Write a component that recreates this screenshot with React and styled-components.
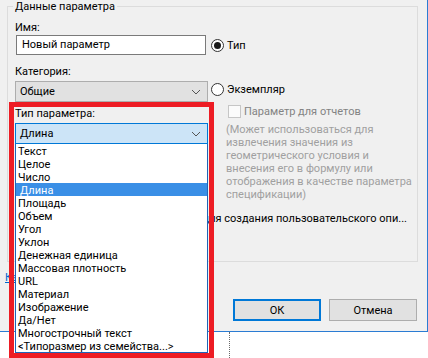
import React from 'react';
import styled, { createGlobalStyle } from 'styled-components';

const GlobalStyle = createGlobalStyle`
  html, body {
    margin: 0;
    padding: 0;
    background: #fff;
  }
  body {
    font-family: Roboto, 'Segoe UI', sans-serif;
    font-size: 11px;
    color: #000;
    overflow: hidden;
  }
  * {
    box-sizing: border-box;
  }
`;

const Screen = styled.div`
  position: relative;
  width: 428px;
  height: 358px;
  overflow: hidden;
`;

const Dialog = styled.div`
  display: flex;
  flex-direction: column;
  width: 428px;
  height: 332px;
  background: #f0f0f0;
  border-right: 1px solid #2b7cd3;
  border-bottom: 1px solid #2b7cd3;
`;

const Group = styled.fieldset`
  margin: 0 0 0 7px;
  width: 411px;
  height: 262px;
  min-width: 0;
  padding: 0 10px 0 7px;
  border: 1px solid #dcdcdc;
`;

const Legend = styled.legend`
  margin-left: -2px;
  padding: 0 2px;
  line-height: 13px;
`;

const Columns = styled.div`
  display: grid;
  grid-template-columns: 193px 1fr;
  column-gap: 3px;
`;

const Column = styled.div`
  display: flex;
  flex-direction: column;
  align-items: flex-start;
  padding-top: ${(p) => p.$pad || 0}px;
`;

const Label = styled.div`
  line-height: 15px;
  margin-top: ${(p) => p.$top}px;
`;

const TextBox = styled.div`
  width: 190px;
  height: 20px;
  margin-left: 1px;
  padding-left: 5px;
  line-height: 18px;
  background: #fff;
  border: 1px solid #7a7a7a;
`;

const Select = styled.div`
  display: flex;
  align-items: center;
  justify-content: space-between;
  width: 193px;
  height: 21px;
  margin-top: 2px;
  padding: 0 6px 0 4px;
  background: ${(p) => (p.$open ? '#cce4f7' : '#e1e1e1')};
  border: 1px solid ${(p) => (p.$open ? '#0078d7' : '#adadad')};
`;

const Chevron = () => (
  <svg width="10" height="6" viewBox="0 0 10 6">
    <polyline points="1,1 5,5 9,1" fill="none" stroke="#555" strokeWidth="1" />
  </svg>
);

const OptionRow = styled.div`
  display: flex;
  align-items: center;
  gap: ${(p) => p.$gap || 3}px;
  height: ${(p) => p.$h || 20}px;
  margin-top: ${(p) => p.$top || 0}px;
  padding-left: ${(p) => p.$indent || 0}px;
  white-space: nowrap;
  color: ${(p) => (p.$disabled ? '#838383' : '#000')};
`;

const Radio = styled.span`
  position: relative;
  width: 13px;
  height: 13px;
  border: 1px solid #333;
  border-radius: 50%;
  background: #fff;

  &::after {
    content: '';
    display: ${(p) => (p.$checked ? 'block' : 'none')};
    position: absolute;
    left: 2px;
    top: 2px;
    width: 7px;
    height: 7px;
    border-radius: 50%;
    background: #1a1a1a;
  }
`;

const CheckBox = styled.span`
  width: 13px;
  height: 13px;
  border: 1px solid #c6c6c6;
  background: #fbfbfb;
`;

const Note = styled.div`
  margin-top: 5px;
  padding-left: 15px;
  line-height: 13px;
  white-space: nowrap;
  color: #a0a0a0;
`;

const TipRow = styled.div`
  display: flex;
  justify-content: flex-end;
  margin-top: 10px;
  overflow: hidden;
  line-height: 15px;
  white-space: nowrap;

  span {
    flex-shrink: 0;
  }
`;

const HelpLink = styled.a`
  margin: 8px 0 0 5px;
  line-height: 15px;
  color: #0066cc;
  text-decoration: underline;
`;

const Buttons = styled.div`
  display: flex;
  justify-content: flex-end;
  gap: 8px;
  margin-top: 14px;
  padding-right: 10px;
`;

const Button = styled.button`
  width: 88px;
  height: 22px;
  padding: 0;
  font: inherit;
  color: #000;
  background: #e1e1e1;
  border: ${(p) => (p.$default ? '2px solid #0078d7' : '1px solid #adadad')};
`;

const Below = styled.div`
  height: 26px;
  margin-left: 229px;
  border-left: 1px dotted #6a6a6a;
`;

const DropList = styled.ul`
  position: absolute;
  left: 15px;
  top: 144px;
  width: 193px;
  margin: 0;
  padding: 0;
  list-style: none;
  background: #fff;
  border: 1px solid #1f64b8;
  border-top: none;
`;

const Item = styled.li`
  height: 13px;
  padding-left: ${(p) => (p.$active ? 4 : 2)}px;
  line-height: 15px;
  white-space: nowrap;
  color: ${(p) => (p.$active ? '#fff' : '#000')};
  background: ${(p) => (p.$active ? '#3a8fe6' : 'transparent')};
`;

const Marker = styled.div`
  position: absolute;
  left: 9px;
  top: 102px;
  width: 205px;
  height: 256px;
  border: 5px solid #ed1c24;
  pointer-events: none;
`;

const types = [
  'Текст',
  'Целое',
  'Число',
  'Длина',
  'Площадь',
  'Объем',
  'Угол',
  'Уклон',
  'Денежная единица',
  'Массовая плотность',
  'URL',
  'Материал',
  'Изображение',
  'Да/Нет',
  'Многострочный текст',
  '<Типоразмер из семейства...>',
];

const App = () => (
  <Screen>
    <GlobalStyle />
    <Dialog>
      <Group>
        <Legend>Данные параметра</Legend>
        <Columns>
          <Column>
            <Label $top={7}>Имя:</Label>
            <TextBox>Новый параметр</TextBox>
            <Label $top={9}>Категория:</Label>
            <Select>
              <span>Общие</span>
              <Chevron />
            </Select>
            <Label $top={4}>Тип параметра:</Label>
            <Select $open>
              <span>Длина</span>
              <Chevron />
            </Select>
          </Column>
          <Column $pad={22}>
            <OptionRow>
              <Radio $checked />
              Тип
            </OptionRow>
            <OptionRow $top={24}>
              <Radio />
              Экземпляр
            </OptionRow>
            <OptionRow $top={5} $h={14} $indent={17} $disabled>
              <CheckBox />
              Параметр для отчетов
            </OptionRow>
            <Note>
              (Может использоваться для
              <br />
              извлечения значения из
              <br />
              геометрического условия и
              <br />
              внесения его в формулу или
              <br />
              отображения в качестве параметра
              <br />
              спецификации)
            </Note>
          </Column>
        </Columns>
        <TipRow>
          <span>&lt;Нет описания подсказки. Измените этот параметр для создания пользовательского опи...</span>
        </TipRow>
      </Group>
      <HelpLink>Как создаются параметры?</HelpLink>
      <Buttons>
        <Button $default>ОК</Button>
        <Button>Отмена</Button>
      </Buttons>
    </Dialog>
    <Below />
    <DropList>
      {types.map((t) => (
        <Item key={t} $active={t === 'Длина'}>
          {t}
        </Item>
      ))}
    </DropList>
    <Marker />
  </Screen>
);

export default App;
